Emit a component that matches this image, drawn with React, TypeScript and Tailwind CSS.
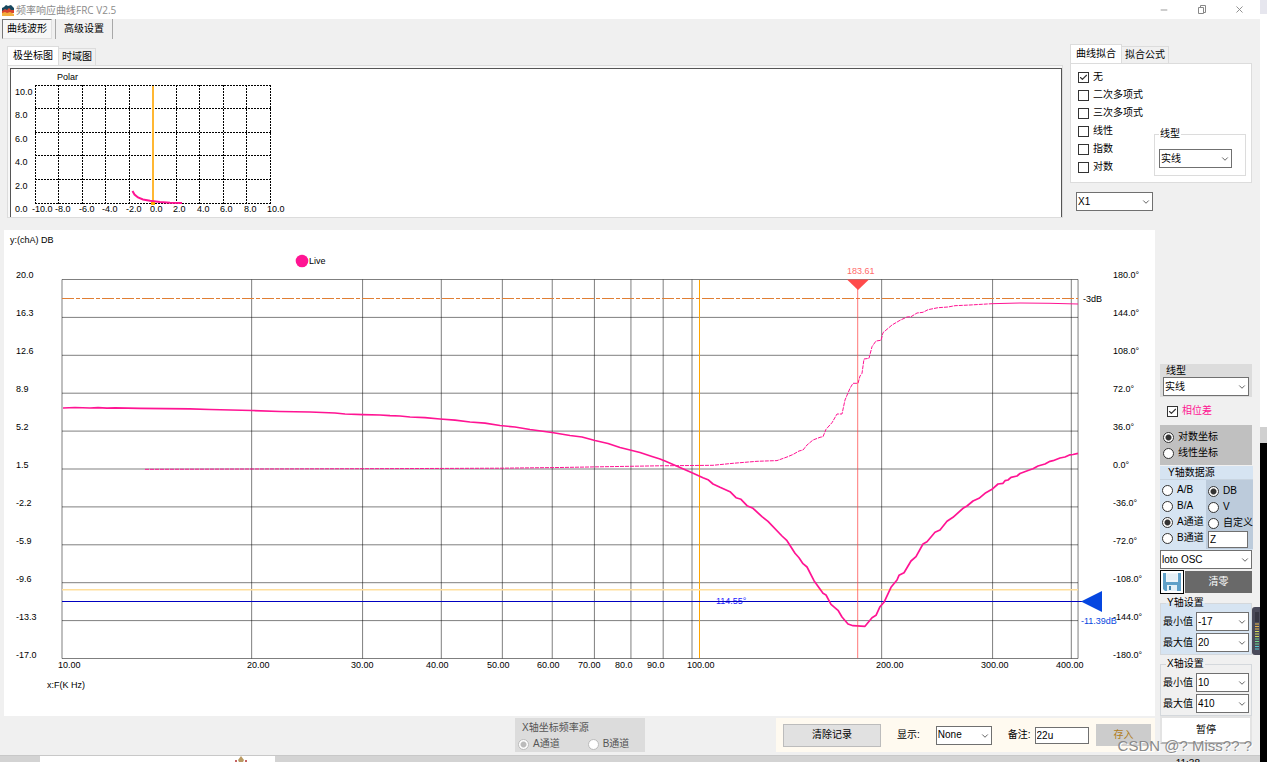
import { ReactNode } from "react";
import { Check, ChevronDown, Minus, X } from "lucide-react";

const PINK = "#ff1493";

const mainCurve =
  "63,408 75,407.5 90,408 98,407.6 107,408.2 115,407.8 140,408.4 190,408.9 210,409.5 252,410.5 280,411.5 310,412 335,413 345,414 363,414.6 380,415 390,415.7 400,416 410,417 425,417.6 440,419 455,420.2 470,422 485,423.2 500,425.5 515,427 530,429.5 552,432.5 570,435.5 582,437 595,440.5 608,443.5 620,447.5 640,452.5 652,456.5 660,459 665,461 680,467.5 692,472.7 703,477.7 708,479.7 713,484 720,487.3 730,491.7 736,497.7 741,499.3 747,505.7 753,508.3 762,516.7 768,521.3 782,536 787,540.7 795,553.3 799,557.7 803,563.7 807,567 814,580.7 823,593.3 826,595 831,604.3 838,610.3 842,617 848,624 853,625.7 865,626.3 872,617.7 876,615.3 880,606.7 884,602.3 891,587.3 897,580 899,575.3 904,572.7 911,561 916,556.7 923,544 927,541.7 935,532.3 940,530 947,521.3 953,517.3 963,508.3 967,506 973,501 979,498.3 985,493.3 992,489.3 998,484 1003,483.3 1005,480.7 1008,480 1011,477.3 1017,476 1020,473.5 1028,470.5 1033,468.7 1038,466 1045,464 1050,461.3 1053,460.7 1060,458 1065,457 1070,454.8 1073,454.5 1078,453.3";

const phaseCurve =
  "145,469.3 250,469 400,468.6 500,468.2 560,467.5 600,466.8 660,465.8 713,465.3 733,463.3 757,461.3 777,460.6 787,457 793,454.5 799,451 803,450 807,445 813,440 820,437.3 823,436.7 826,429.3 832,422.7 837,414 842,414 845,400 850,388.3 853,383.3 858,383.3 860,376 862,373.3 864,359 869,358.3 872,346.7 876,341 881,340.3 883,332.7 892,325 900,320.3 907,317 911,316.7 917,313 923,312.3 928,309.7 938,307.7 948,307 955,305.7 970,305 992,303.7";

const polarCurve = "132.5,191 134.5,194.5 138,197.5 143,199.5 150,200.8 160,202 170,202.8 182,203";

const leftLabels = ["20.0", "16.3", "12.6", "8.9", "5.2", "1.5", "-2.2", "-5.9", "-9.6", "-13.3", "-17.0"];
const rightLabels = ["180.0°", "144.0°", "108.0°", "72.0°", "36.0°", "0.0°", "-36.0°", "-72.0°", "-108.0°", "-144.0°", "-180.0°"];
const freqLines = [10, 20, 30, 40, 50, 60, 70, 80, 90, 100, 200, 300, 400, 410];
const freqLabels = [
  { x: 58, text: "10.00" },
  { x: 247, text: "20.00" },
  { x: 351, text: "30.00" },
  { x: 426, text: "40.00" },
  { x: 487, text: "50.00" },
  { x: 537, text: "60.00" },
  { x: 578, text: "70.00" },
  { x: 615, text: "80.0" },
  { x: 647, text: "90.0" },
  { x: 687, text: "100.00" },
  { x: 876, text: "200.00" },
  { x: 981, text: "300.00" },
  { x: 1056, text: "400.00" },
];

const toX = (freq: number) => 62 + 630 * Math.log10(freq / 10);
const toY = (row: number) => 279.5 + row * 37.9;

function Select({ label, value, className = "" }: { label: string; value: string; className?: string }) {
  return (
    <div className={`relative h-[19px] ${className}`}>
      <select
        aria-label={label}
        defaultValue={value}
        className="block h-full w-full appearance-none border border-[#707070] bg-white pl-px pr-3 text-[10px] leading-4 text-black"
      >
        <option>{value}</option>
      </select>
      <ChevronDown className="pointer-events-none absolute right-[2px] top-[5px] size-[10px] text-[#444]" strokeWidth={2} />
    </div>
  );
}

function CheckItem({ label, checked, className = "" }: { label: string; checked?: boolean; className?: string }) {
  return (
    <label className={`flex items-center gap-1 ${className}`}>
      <span className="relative size-[11px] shrink-0">
        <input
          type="checkbox"
          defaultChecked={checked}
          className="peer block size-[11px] appearance-none border border-[#333] bg-white"
        />
        <Check className="pointer-events-none absolute left-px top-px hidden size-[9px] text-[#333] peer-checked:block" strokeWidth={3} />
      </span>
      {label}
    </label>
  );
}

interface RadioProps {
  name: string;
  label: string;
  checked?: boolean;
  disabled?: boolean;
}

function RadioItem({ name, label, checked, disabled }: RadioProps) {
  return (
    <label className="flex h-4 items-center gap-1 whitespace-nowrap">
      <input
        type="radio"
        name={name}
        defaultChecked={checked}
        disabled={disabled}
        className="size-[11px] shrink-0 appearance-none rounded-full border border-[#333] bg-white checked:bg-[radial-gradient(circle,#333_0_2.5px,transparent_3.5px)] disabled:border-[#bbb] disabled:checked:bg-[radial-gradient(circle,#bbb_0_2.5px,transparent_3.5px)]"
      />
      {label}
    </label>
  );
}

function Tabs({ active, other, children }: { active: string; other: string; children: ReactNode }) {
  return (
    <div>
      <div role="tablist" className="flex items-end">
        <button role="tab" aria-selected="true" className="h-[19px] border border-b-0 border-[#dcdcdc] bg-white px-[5px]">
          {active}
        </button>
        <button role="tab" aria-selected="false" className="h-[17px] border border-b-0 border-l-0 border-[#dcdcdc] px-[3px]">
          {other}
        </button>
      </div>
      {children}
    </div>
  );
}

function TitleBar() {
  return (
    <header className="flex h-[19px] shrink-0 items-center bg-white pl-[2px]">
      <svg viewBox="0 0 12 12" className="size-3">
        <path d="M0 4 2 3 4 1 6 2 9 1 12 4V8H0z" fill="#17485f" />
        <path d="M0 7 3 5 5 6 7 4 9 6 12 6V9H0z" fill="#d9442f" />
        <path d="M0 9 3 8 5 9 8 8 12 10V12H0z" fill="#f3ae3d" />
      </svg>
      <h1 className="ml-[2px] font-['Open_Sans','Noto_Sans_CJK_SC',sans-serif] text-[10px] text-[#8c8c8c]">频率响应曲线FRC V2.5</h1>
      <div className="ml-auto flex items-center gap-7 pr-[15px] text-[#888]">
        <button aria-label="最小化">
          <Minus className="size-[10px]" strokeWidth={2} />
        </button>
        <button aria-label="还原">
          <svg viewBox="0 0 9 9" className="size-[9px]" fill="none" stroke="currentColor">
            <path d="M1.500 2.500H6.500V8.500H1.500zM3.500 2V.5H8.500V7.500H7" />
          </svg>
        </button>
        <button aria-label="关闭">
          <X className="size-[11px]" strokeWidth={2} />
        </button>
      </div>
    </header>
  );
}

function PolarChart() {
  return (
    <svg viewBox="11 69 300 148" className="h-[148px] w-[300px] font-['Liberation_Sans',Arial,sans-serif] text-[9px]">
      <text x="57" y="80">Polar</text>
      <g stroke="#000" strokeWidth="1" strokeDasharray="2 1">
        {Array.from({ length: 11 }, (_, i) => (
          <line key={i} x1={Math.floor(35 + i * 23.5) + 0.5} x2={Math.floor(35 + i * 23.5) + 0.5} y1="85" y2="204" />
        ))}
        {Array.from({ length: 6 }, (_, i) => (
          <line key={i} x1="35" x2="271" y1={Math.floor(85 + i * 23.6) + 0.5} y2={Math.floor(85 + i * 23.6) + 0.5} />
        ))}
      </g>
      <line x1="153" x2="153" y1="86" y2="204" stroke="#ffb732" strokeWidth="2" />
      <polyline points={polarCurve} fill="none" stroke={PINK} strokeWidth="2" />
      <rect x="151" y="202" width="4" height="3" fill="#ffa500" />
      {["10.0", "8.0", "6.0", "4.0", "2.0", "0.0"].map((text, i) => (
        <text key={text} x="15" y={Math.round(94.5 + i * 23.5)}>
          {text}
        </text>
      ))}
      {["-10.0", "-8.0", "-6.0", "-4.0", "-2.0", "0.0", "2.0", "4.0", "6.0", "8.0", "10.0"].map((text, i) => (
        <text key={text} x={i === 0 ? 32 : Math.round(i < 5 ? 31.5 + i * 23.5 : 32 + i * 23.5)} y="212">
          {text}
        </text>
      ))}
    </svg>
  );
}

function BodeChart() {
  return (
    <svg viewBox="4 230 1151 486" className="block w-full bg-white font-['Liberation_Sans',Arial,sans-serif] text-[9px]">
      <text x="10" y="243">y:(chA) DB</text>
      <circle cx="302" cy="261" r="6.3" fill={PINK} />
      <text x="309" y="264">Live</text>
      <g stroke="#000" strokeOpacity="0.5">
        {leftLabels.map((_, i) => (
          <line key={i} x1="62" x2="1078" y1={toY(i)} y2={toY(i)} />
        ))}
        {freqLines.map((freq) => (
          <line key={freq} x1={toX(freq)} x2={toX(freq)} y1="279.5" y2="658.5" />
        ))}
      </g>
      <line x1="699.5" x2="699.5" y1="280" y2="658" stroke="#ffa500" />
      <line x1="62" x2="1078" y1="298.5" y2="298.5" stroke="#e07f35" strokeDasharray="12 2 4 2" />
      <line x1="62" x2="1078" y1="589.7" y2="589.7" stroke="#ffdf9c" strokeWidth="1.5" />
      <text x="713" y="604" fill="#2222ff">-114.55°</text>
      <line x1="62" x2="1082" y1="601.5" y2="601.5" stroke="#0000c0" />
      <polyline points={phaseCurve} fill="none" stroke={PINK} strokeWidth="1" strokeDasharray="4 1" />
      <polyline points="992,303.7 1020,303 1050,303.3 1078,304" fill="none" stroke={PINK} strokeWidth="1" />
      <polyline points={mainCurve} fill="none" stroke={PINK} strokeWidth="1.7" strokeLinejoin="round" />
      <line x1="857.7" x2="857.7" y1="280" y2="658" stroke="#ff4b4b" strokeOpacity="0.75" />
      <path d="M847 279.500H869L858 290z" fill="#ff4b4b" />
      <text x="847" y="274" fill="#ff6b6b">183.61</text>
      <text x="1083" y="302">-3dB</text>
      <path d="M1081 601.5 1102 591V612z" fill="#0546e0" />
      {leftLabels.map((text, i) => (
        <text key={text} x="16" y={Math.round(278 + i * 38)}>
          {text}
        </text>
      ))}
      {rightLabels.map((text, i) => (
        <text key={text} x="1113" y={Math.round(278 + i * 38)}>
          {text}
        </text>
      ))}
      <text x="1081" y="624" fill="#0546e0">-11.39dB</text>
      {freqLabels.map((item) => (
        <text key={item.text} x={item.x} y="668">
          {item.text}
        </text>
      ))}
      <text x="47" y="688">x:F(K Hz)</text>
    </svg>
  );
}

function FitPanel() {
  return (
    <section className="w-[182px]">
      <Tabs active="曲线拟合" other="拟合公式">
        <div className="flex h-[120px] items-end justify-between border border-[#dcdcdc] bg-white py-[6px] pl-[7px] pr-[5px]">
          <div className="flex flex-col">
            {["无", "二次多项式", "三次多项式", "线性", "指数", "对数"].map((label, i) => (
              <CheckItem key={label} label={label} checked={i === 0} className="h-[18px]" />
            ))}
          </div>
          <fieldset className="-ml-5 h-[49px] w-[92px] border border-[#dcdcdc] px-1">
            <legend className="px-px">线型</legend>
            <Select label="线型" value="实线" className="mt-2 w-[73px]" />
          </fieldset>
        </div>
      </Tabs>
      <Select label="倍率" value="X1" className="ml-[6px] mt-[9px] w-[77px]" />
    </section>
  );
}

function AxisSettings({ title, min, max, className }: { title: string; min: string; max: string; className: string }) {
  return (
    <fieldset className={`mt-[2px] h-[59px] border border-[#d4d8dc] pr-[2px] ${className}`}>
      <legend className="ml-[5px] px-px leading-[14px]">{title}</legend>
      <div className="flex flex-col gap-[2px] pt-[2px]">
        {[
          { label: "最小值", value: min },
          { label: "最大值", value: max },
        ].map((row) => (
          <div key={row.label} className="flex items-center justify-between pl-[2px]">
            <span>{row.label}</span>
            <Select label={title + row.label} value={row.value} className="w-[53px]" />
          </div>
        ))}
      </div>
    </fieldset>
  );
}

function Sidebar() {
  return (
    <aside className="ml-[5px] mr-2 flex w-[92px] shrink-0 flex-col pt-[134px]">
      <div className="h-[33px] bg-[#dcdcdc] px-[3px]">
        <p className="pl-[3px] leading-[13px]">线型</p>
        <Select label="曲线线型" value="实线" />
      </div>
      <CheckItem label="相位差" checked className="h-7 pl-[7px] text-[#ff1493]" />
      <div className="flex h-10 flex-col justify-center bg-[#c0c0c0] pl-[3px]">
        <RadioItem name="scale" label="对数坐标" checked />
        <RadioItem name="scale" label="线性坐标" />
      </div>
      <fieldset className="mt-px h-[84px] overflow-hidden bg-[#d6e4f2]">
        <legend className="float-left h-[14px] w-full border-b border-[#c8d4e0] pl-2 leading-[14px]">Y轴数据源</legend>
        <div className="flex w-full">
          <div className="w-[46px] shrink-0 pl-[2px] pt-[2px]">
            <RadioItem name="source" label="A/B" />
            <RadioItem name="source" label="B/A" />
            <RadioItem name="source" label="A通道" checked />
            <RadioItem name="source" label="B通道" />
          </div>
          <div className="h-[69px] min-w-0 flex-1 overflow-hidden bg-[#bccbdb] pl-[2px] pt-[3px]">
            <RadioItem name="unit" label="DB" checked />
            <RadioItem name="unit" label="V" />
            <RadioItem name="unit" label="自定义" />
            <input
              aria-label="自定义单位"
              defaultValue="Z"
              className="block h-[17px] w-10 border border-[#707070] bg-white px-px text-[10px]"
            />
          </div>
        </div>
      </fieldset>
      <Select label="设备" value="loto OSC" />
      <div className="mt-px flex h-6 items-center gap-px">
        <button aria-label="保存" className="flex h-6 w-6 items-center justify-center border border-black bg-white">
          <svg viewBox="0 0 20 20" className="size-5">
            <path d="M1 1H19V19H3L1 17z" fill="#5fa0c8" />
            <path d="M4 1H16V10H4z" fill="#eef5fa" />
            <path d="M5 3H15M5 5H15M5 7H15" stroke="#dce9f2" strokeWidth="1" />
            <path d="M5 13H15V19H5z" fill="#e4f0f7" />
            <path d="M7 14H9V18H7z" fill="#4384ab" />
          </svg>
        </button>
        <button className="h-[22px] flex-1 bg-[#696969] text-white">清零</button>
      </div>
      <AxisSettings title="Y轴设置" min="-17" max="20" className="bg-[#d6e4f2]" />
      <AxisSettings title="X轴设置" min="10" max="410" className="bg-transparent" />
      <button className="h-7 border-2 border-[#e3e3e3] border-b-[#b5b5b5] bg-white">暂停</button>
    </aside>
  );
}

function BottomBar() {
  return (
    <div className="mt-[2px] flex h-[34px] justify-end">
      <fieldset disabled className="mr-[131px] w-[130px] bg-[#dcdcdc] text-[#555]">
        <legend className="float-left w-full pl-[7px] pt-[2px] leading-4">X轴坐标频率源</legend>
        <div className="flex w-full gap-7 pl-[3px]">
          <RadioItem name="freq" label="A通道" checked disabled />
          <RadioItem name="freq" label="B通道" disabled />
        </div>
      </fieldset>
      <div className="flex w-[379px] items-center bg-[#fffaf0] pl-[7px] pr-1">
        <button className="h-[23px] w-[98px] border border-[#bcbcbc] bg-[#e1e1e1]">清除记录</button>
        <span className="ml-4">显示:</span>
        <Select label="显示" value="None" className="ml-4 w-14" />
        <label htmlFor="remark" className="ml-4">
          备注:
        </label>
        <input
          id="remark"
          defaultValue="22u"
          className="ml-1 h-[17px] w-[54px] border border-[#707070] bg-white px-px text-[10px]"
        />
        <button className="ml-auto h-[22px] w-[55px] bg-[#ccc] text-[#b07d1c]">存入</button>
      </div>
    </div>
  );
}

function MeterWidget() {
  return (
    <svg viewBox="0 0 8 48" className="absolute right-[7px] top-[607px] h-12 w-2">
      <path d="M8 0H3Q0 0 0 3V45Q0 48 3 48H8z" fill="#4a4a5a" />
      <path d="M3 6H7M3 8H7M3 10H7M3 12H7M3 14H7" stroke="#22222c" />
      <path d="M3 17H7M3 19.500H7M3 22H7" stroke="#e8b84a" />
      <path d="M3 24.500H7M3 27H7M3 29.500H7" stroke="#d3dc5a" />
      <path d="M3 32H7M3 34.500H7M3 37H7" stroke="#6fd68a" />
      <path d="M3 39.500H7M3 42H7" stroke="#58c9d0" />
    </svg>
  );
}

export default function App() {
  return (
    <div className="relative flex h-screen overflow-hidden bg-[#f0f0f0] font-['Liberation_Sans','Noto_Sans_CJK_SC',sans-serif] text-[10px] leading-[14px] text-black">
      <div className="flex min-w-0 flex-1 flex-col">
        <TitleBar />
        <nav className="flex h-[25px] shrink-0 items-start">
          <button className="ml-[2px] h-5 border border-[#e0e0e0] border-l-[#777] border-t-[#777] bg-[#f7f7f7] px-1">
            曲线波形
          </button>
          <button className="ml-[3px] h-5 border-x border-[#a8a8a8] px-2">高级设置</button>
        </nav>
        <div className="flex h-[186px] shrink-0 items-start">
          <section className="ml-[7px] mr-[7px] min-w-0 flex-1 pt-[2px]">
            <Tabs active="极坐标图" other="时域图">
              <div className="h-[153px] border border-[#dcdcdc] bg-[#f8f8f8] pl-[2px] pt-[2px]">
                <div className="h-[149px] border border-b-0 border-[#555] bg-white">
                  <PolarChart />
                </div>
              </div>
            </Tabs>
          </section>
          <div className="mr-2">
            <FitPanel />
          </div>
        </div>
        <main className="flex shrink-0">
          <div className="ml-1 min-w-0 flex-1">
            <BodeChart />
            <BottomBar />
          </div>
          <Sidebar />
        </main>
        <footer className="mt-[3px] flex h-7 shrink-0 items-start border-t border-[#c8c8c8] bg-[#d3d3d3]">
          <div className="ml-10 flex h-7 w-[235px] justify-end bg-white pr-7">
            <svg viewBox="0 0 12 12" className="size-3">
              <path d="M6 0 9 4 8 6 10 12H2L4 6 3 4z" fill="#b99a62" />
              <path d="M0 5H2M10 5H12" stroke="#b33030" strokeWidth="1.5" />
            </svg>
          </div>
          <time className="ml-auto mr-[60px] pt-px">11:38</time>
        </footer>
      </div>
      <div className="flex w-[7px] shrink-0 flex-col bg-black">
        <div className="h-[14px] bg-[#e6e6ee]" />
        <div className="h-[413px] bg-white" />
        <div className="h-4 bg-[#d0d0d0]" />
      </div>
      <MeterWidget />
      <p className="pointer-events-none absolute bottom-[6px] right-[15px] text-[15px] leading-5 text-[#8a8a8a] [text-shadow:1px_1px_0_#fff]">
        CSDN @? Miss?? ?
      </p>
    </div>
  );
}
